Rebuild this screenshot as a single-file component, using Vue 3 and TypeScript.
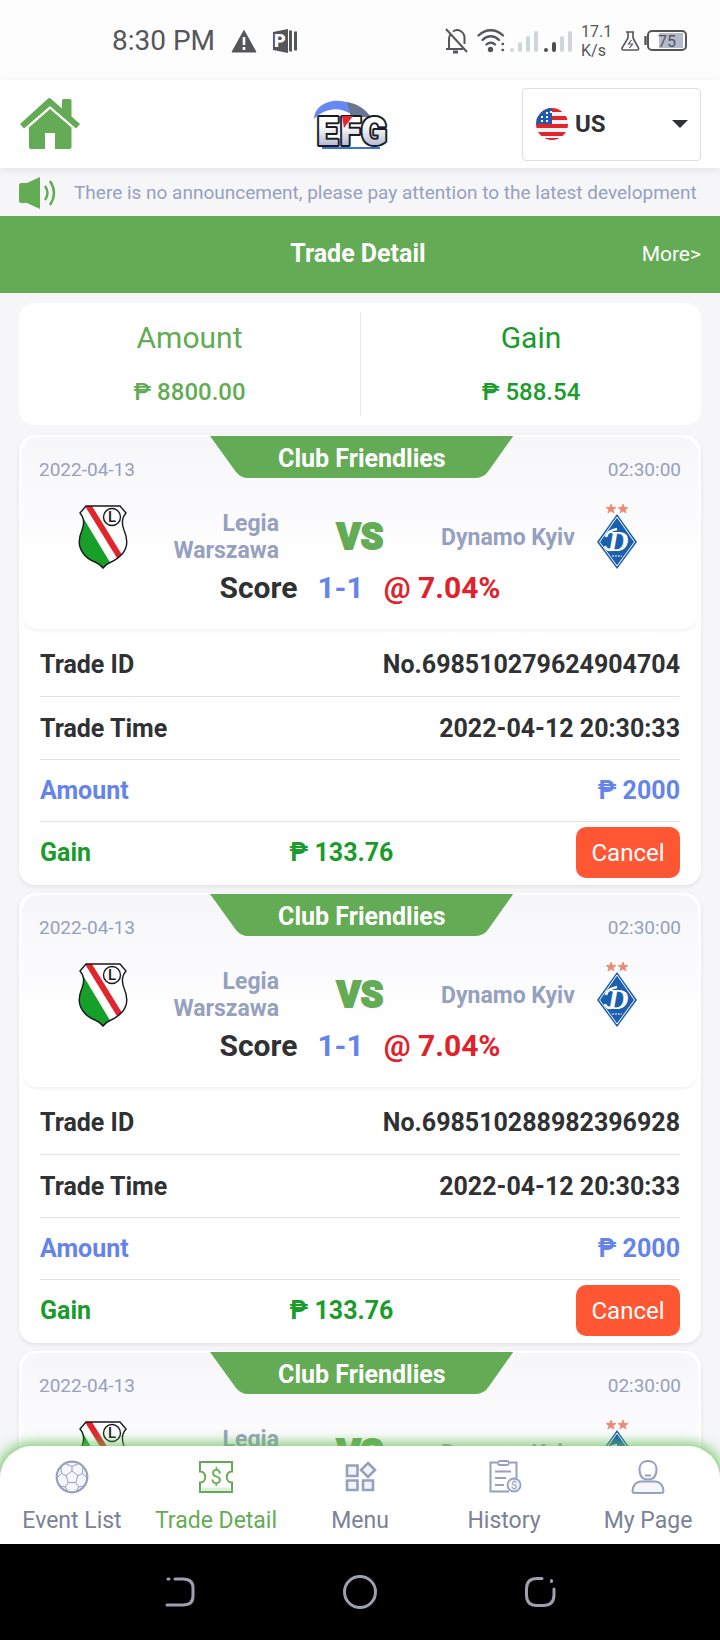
<script setup lang="ts">
import { ref } from 'vue'

interface Trade {
  id: string
  league: string
  date: string
  kickoff: string
  home: string
  away: string
  score: string
  odds: string
  time: string
  amount: string
  gain: string
}

interface Tab {
  key: string
  label: string
}

const base: Omit<Trade, 'id'> = {
  league: 'Club Friendlies',
  date: '2022-04-13',
  kickoff: '02:30:00',
  home: 'Legia Warszawa',
  away: 'Dynamo Kyiv',
  score: '1-1',
  odds: '@ 7.04%',
  time: '2022-04-12 20:30:33',
  amount: '₱ 2000',
  gain: '₱ 133.76',
}

const trades: Trade[] = [
  { ...base, id: 'No.698510279624904704' },
  { ...base, id: 'No.698510288982396928' },
  { ...base, id: '' },
]

const tabs: Tab[] = [
  { key: 'events', label: 'Event List' },
  { key: 'trade', label: 'Trade Detail' },
  { key: 'menu', label: 'Menu' },
  { key: 'history', label: 'History' },
  { key: 'me', label: 'My Page' },
]

const activeTab = ref('trade')
const language = ref('US')
</script>

<template>
  <div class="screen">
    <div class="status">
      <div class="status-left">
        <span class="clock">8:30 PM</span>
        <svg width="26" height="24" viewBox="0 0 26 24" aria-hidden="true">
          <path d="M13 1.5 25 23H1Z" fill="#55565a" stroke="#55565a" stroke-linejoin="round" />
          <path d="M13 8v8M13 18v3" stroke="#fff" stroke-width="2.6" />
        </svg>
        <svg width="25" height="26" viewBox="0 0 25 26" aria-hidden="true">
          <path d="M0 4 15 1v24L0 22Z" fill="#55565a" />
          <path d="M17.500 2.500v21M22.500 3.500v19" stroke="#55565a" stroke-width="3" />
          <text x="1" y="19" font-family="Roboto, sans-serif" font-size="18" font-weight="900" fill="#fff">P</text>
        </svg>
      </div>
      <div class="status-right">
        <svg width="25" height="26" viewBox="0 0 25 26" fill="none" stroke="#55565a" stroke-width="2" aria-hidden="true">
          <path d="M5 21V11c0-1.500.4-3 1.200-4.200M9 3.500C14-.5 20.500 4 20.500 10v6M2 21h17M2 1l21 23" />
          <path d="M9 24h5" stroke-width="3" />
        </svg>
        <svg width="29" height="26" viewBox="0 0 29 26" fill="none" stroke="#55565a" stroke-width="2.400" stroke-linecap="round" aria-hidden="true">
          <path d="M1.500 7.500c7-7 17.500-7 24.500 0M5.500 12c5-5 11.500-5 16.500 0M9.500 16.500c2.600-2.500 6-2.500 8.500 0" />
          <circle cx="13.500" cy="21.500" r="1.500" fill="#55565a" />
          <path d="M25.500 16h.5M25.500 22h.5" />
        </svg>
        <svg width="63" height="24" viewBox="0 0 63 24" stroke="#cfd6d6" stroke-width="4" stroke-linecap="round" aria-hidden="true">
          <path d="M2 21v0M10 15v6M18 9v12M26 4v17M52 9v12M60 4v17" />
          <path d="M36 21v0M44 15v6" stroke="#4d4e52" />
        </svg>
        <span class="speed"><span>17.1</span><span>K/s</span></span>
        <svg class="flask" width="19" height="20" viewBox="0 0 19 20" fill="none" stroke="#55565a" stroke-width="1.600" aria-hidden="true">
          <path d="M5 1h8M7 1v6L1 17q-.5 2 1.500 2h13.500q2 0 1.500-2L12 7V1" />
          <path d="m10.500 9-3 4h4l-3 4" stroke-width="1.200" />
        </svg>
        <svg width="44" height="24" viewBox="0 0 44 24" aria-hidden="true">
          <path d="M1.500 7v9" stroke="#55565a" stroke-width="2.400" />
          <rect x="15" y="4" width="24" height="15" fill="#b5bbcc" />
          <rect x="4" y="2" width="38" height="19" rx="4" fill="none" stroke="#55565a" stroke-width="2" />
          <text x="23" y="17.500" text-anchor="middle" font-family="Roboto, sans-serif" font-size="16" fill="#55565a">75</text>
        </svg>
      </div>
    </div>

    <header class="header">
      <a class="home" href="#" aria-label="Home">
        <svg width="60" height="52" viewBox="0 0 60 52" fill="#64ab55" aria-hidden="true">
          <path d="M30 0 42 10.500V2.500Q42 1 43.500 1H50q1.500 0 1.500 1.500V18.500L60 26 56 30.500 30 8 4 30.500 0 26 27 1.500Q30-1 30 0Z" />
          <path d="M30 11 51.500 29.500V49q0 2-2 2H35V35H25V51H11q-2 0-2-2V29.500Z" />
        </svg>
      </a>
      <svg class="logo" width="94" height="50" viewBox="0 0 94 50" aria-label="EFG">
        <defs>
          <linearGradient id="metal" x1="0" y1="0" x2="0" y2="1">
            <stop offset=".35" stop-color="#fff" />
            <stop offset="1" stop-color="#979db8" />
          </linearGradient>
        </defs>
        <path d="M0 20C1 2 26-4 43 8L54 15H37C25 7 10 9 0 20Z" fill="#6688f4" />
        <path d="M33 3C44 5 51 10 57 18H37Z" fill="#68768f" />
        <path d="M8 49H66" stroke="#3977cf" stroke-width="2" />
        <g font-family="Roboto, sans-serif" font-weight="900" font-size="38" fill="url(#metal)" stroke="#191c26" stroke-width="4" stroke-linejoin="round" paint-order="stroke">
          <text x="3" y="46">E</text>
          <text x="26" y="46">F</text>
          <text x="47" y="46">G</text>
        </g>
        <path d="M28 17H39L30 29Z" fill="#e32630" />
      </svg>
      <label class="language">
        <svg width="32" height="32" viewBox="0 0 32 32" aria-hidden="true">
          <clipPath id="flag"><circle cx="16" cy="16" r="16" /></clipPath>
          <g clip-path="url(#flag)">
            <path fill="#f3f3f4" d="M0 0h32v32H0z" />
            <path d="M0 2h32M0 10h32M0 18h32M0 26h32M0 32h32" stroke="#e4242b" stroke-width="4" />
            <path fill="#2359a8" d="M0 0h16v16H0z" />
            <path d="M5 9h2M10 5h2M10 9h2M5 13h2M10 13h2M14 4h2" stroke="#fff" stroke-width="2" />
          </g>
        </svg>
        <select v-model="language" aria-label="Language">
          <option value="US">US</option>
          <option value="PH">PH</option>
        </select>
        <svg width="16" height="8" viewBox="0 0 16 8" aria-hidden="true"><path d="M0 0h16L8 8Z" fill="#2f3133" /></svg>
      </label>
    </header>

    <div class="notice">
      <svg width="37" height="32" viewBox="0 0 37 32" aria-hidden="true">
        <path d="M2 6h6L21 0v32L8 26H2Q0 26 0 24V8Q0 6 2 6Z" fill="#64ab55" />
        <path d="M26 9q5 7 0 14M31 4q8 12 0 24" fill="none" stroke="#64ab55" stroke-width="2.400" />
      </svg>
      <p>There is no announcement, please pay attention to the latest development</p>
    </div>

    <div class="titlebar">
      <h1>Trade Detail</h1>
      <a href="#">More&gt;</a>
    </div>

    <main class="content">
      <section class="summary">
        <div class="total">
          <span class="total-label">Amount</span>
          <span class="total-value">₱ 8800.00</span>
        </div>
        <div class="total gain">
          <span class="total-label">Gain</span>
          <span class="total-value">₱ 588.54</span>
        </div>
      </section>

      <article v-for="(trade, index) in trades" :key="index" class="card">
        <div class="match">
          <div class="banner">
            <svg viewBox="0 0 303 42" preserveAspectRatio="none" aria-hidden="true">
              <path d="M0 0H303L279 34Q274 42 265 42H38Q31 42 26 36Z" fill="#64ab55" />
            </svg>
            <h2>{{ trade.league }}</h2>
          </div>
          <div class="when">
            <time>{{ trade.date }}</time>
            <time>{{ trade.kickoff }}</time>
          </div>
          <div class="teams">
            <svg class="crest" width="50" height="64" viewBox="0 0 50 64" aria-hidden="true">
              <clipPath :id="`shield-${index}`">
                <path d="M8 1H42L48 8Q42 15 46 25 52 39 45 48 40 54 33 57 28 59 25 63 22 59 17 57 9 54 5 48-2 39 4 25 8 15 2 8Z" />
              </clipPath>
              <g :clip-path="`url(#shield-${index})`">
                <path fill="#fff" d="M0 0h50v64H0z" />
                <path d="M0 4 36 64H0Z" fill="#16a02a" />
                <path d="M8-3 48 62" stroke="#e1252c" stroke-width="6" />
              </g>
              <path d="M8 1H42L48 8Q42 15 46 25 52 39 45 48 40 54 33 57 28 59 25 63 22 59 17 57 9 54 5 48-2 39 4 25 8 15 2 8Z" fill="none" stroke="#17191c" stroke-width="1.400" />
              <circle cx="34" cy="12" r="8.500" fill="#fff" stroke="#17191c" stroke-width="1.400" />
              <text x="34" y="17" text-anchor="middle" font-family="Roboto, sans-serif" font-weight="500" font-size="15" fill="#17191c">L</text>
            </svg>
            <span class="team home-team">{{ trade.home }}</span>
            <span class="versus">VS</span>
            <span class="team">{{ trade.away }}</span>
            <svg class="crest" width="50" height="66" viewBox="0 0 50 66" aria-hidden="true">
              <path d="m19 0 1.300 3.300 3.700.2-2.900 2.200 1 3.300-3.100-2-3.100 2 1-3.300L14 3.500l3.700-.2ZM31 0l1.300 3.300 3.700.2-2.900 2.200 1 3.300-3.100-2-3.100 2 1-3.300L26 3.500l3.700-.2Z" fill="#e98b76" stroke="#e98b76" stroke-width=".8" />
              <path d="M25 10 45 38 25 65 5 38Z" fill="#1c5fae" />
              <path d="M25 13 42.500 38 25 62 7.500 38Z" fill="none" stroke="#fff" />
              <text x="26" y="47" text-anchor="middle" font-family="'Liberation Serif', serif" font-style="italic" font-weight="700" font-size="29" fill="#fff">D</text>
              <path d="M14 33q1-6 11-8M13 42q1 4 6 4" fill="none" stroke="#fff" stroke-width="2.500" />
              <path d="M20 52h10" stroke="#8fb0da" stroke-width="2" stroke-dasharray="2 1" />
            </svg>
          </div>
          <div class="result">
            <span>Score</span>
            <span class="score">{{ trade.score }}</span>
            <span class="odds">{{ trade.odds }}</span>
          </div>
        </div>
        <dl v-if="trade.id" class="rows">
          <div class="row first"><dt>Trade ID</dt><dd>{{ trade.id }}</dd></div>
          <div class="row"><dt>Trade Time</dt><dd>{{ trade.time }}</dd></div>
          <div class="row blue"><dt>Amount</dt><dd>{{ trade.amount }}</dd></div>
          <div class="row green">
            <dt>Gain</dt>
            <dd>{{ trade.gain }}</dd>
            <dd class="action"><button type="button" class="cancel">Cancel</button></dd>
          </div>
        </dl>
      </article>
    </main>

    <nav class="tabs">
      <button
        v-for="tab in tabs"
        :key="tab.key"
        type="button"
        class="tab"
        :class="{ active: tab.key === activeTab }"
        @click="activeTab = tab.key"
      >
        <svg width="34" height="34" viewBox="0 0 34 34" fill="none" stroke="currentColor" stroke-width="1.800" aria-hidden="true">
          <g v-if="tab.key === 'events'">
            <circle cx="17" cy="17" r="15.300" fill="#f6f7fa" stroke-width="2.200" />
            <path d="m17 11 6 4.500-2.300 7h-7.400L11 15.500ZM17 11V6.500M23 15.500l4.500-2M20.700 22.500l3 4.500M13.300 22.500l-3 4.500M11 15.500l-4.500-2M10 3.500l7 3 7-3M2 18l4.500-4.500L6 6M32 18l-4.500-4.500L28 6M5 26l5.300 1 3 5M29 26l-5.300 1-3 5" stroke-width="1" />
          </g>
          <g v-else-if="tab.key === 'trade'">
            <path d="M1 2h32v9.500c-7 0-7 11 0 11V32H1v-9.500c7 0 7-11 0-11Z" stroke-width="2" />
            <path d="M3 29.500h28" stroke-width="4" opacity=".2" />
            <text x="17" y="24" text-anchor="middle" font-family="Roboto, sans-serif" font-size="20" fill="currentColor" stroke="none">$</text>
          </g>
          <g v-else-if="tab.key === 'menu'" stroke-width="2.600">
            <path d="M4 5.500h10.500V16H4ZM4 20.500h10.500V30H4ZM20 20.500h10V30H20ZM25 3l7 7-7 7-7-7Z" fill="#f3f4f8" />
          </g>
          <g v-else-if="tab.key === 'history'">
            <path d="M10 2.500H3.500v29H22M23 2.500h6.500V18M8 11.500h16M8 18h11M8 25h9" stroke-width="2" />
            <rect x="11" y="1" width="11" height="4" rx="2" />
            <circle cx="27" cy="25" r="6.500" fill="#f3f4f8" />
            <text x="27" y="29" text-anchor="middle" font-family="Roboto, sans-serif" font-size="11" fill="currentColor" stroke="none">$</text>
          </g>
          <g v-else stroke-width="2">
            <path d="M17 1c5 0 8.500 3 8.500 8 0 6-2.500 10.500-8.500 10.500S8.500 15 8.500 9c0-5 3.500-8 8.500-8ZM14 15.500h6" />
            <path d="M9 21.500h16q7 1.500 7.500 9.500 0 2-2.500 2H4q-2.500 0-2.500-2Q2 23 9 21.500Z" fill="#f6f7fa" />
          </g>
        </svg>
        <span>{{ tab.label }}</span>
      </button>
    </nav>

    <div class="system">
      <button type="button" aria-label="Back">
        <svg width="34" height="34" viewBox="0 0 34 34"><path d="M12 4h8q10 0 10 9v8q0 9-10 9H4M5 4h1" /></svg>
      </button>
      <button type="button" aria-label="Home screen">
        <svg width="34" height="34" viewBox="0 0 34 34"><circle cx="17" cy="17" r="15.500" /></svg>
      </button>
      <button type="button" aria-label="Recent apps">
        <svg width="34" height="34" viewBox="0 0 34 34"><path d="M19 3.500H14Q3.500 3.500 3.500 14v6Q3.500 30.500 14 30.500h6Q31 30.500 31 20v-6M28.500 5.500v1" /></svg>
      </button>
    </div>
  </div>
</template>

<style>
body {
  background: #f6f6f8;
}
</style>

<style scoped>
.screen {
  display: flex;
  flex-direction: column;
  height: 100vh;
  overflow: hidden;
  background: #f6f6f8;
  color: #2f3133;
  font-family: Roboto, "Liberation Sans", sans-serif;
}
.screen * {
  box-sizing: border-box;
}
svg {
  display: block;
  flex: none;
  overflow: visible;
}
a {
  color: inherit;
  text-decoration: none;
}
button {
  margin: 0;
  padding: 0;
  border: 0;
  background: none;
  font: inherit;
  cursor: pointer;
}

.status {
  display: flex;
  flex: none;
  align-items: center;
  justify-content: space-between;
  height: 80px;
  padding: 2px 32px 0 112px;
  background: #fdfdfd;
  color: #55565a;
}
.status-left,
.status-right {
  display: flex;
  align-items: center;
}
.status-left {
  gap: 16px;
}
.status-right {
  gap: 8px;
}
.status-right svg:nth-child(2) {
  margin-right: -4px;
}
.clock {
  font-size: 28px;
  line-height: 32px;
}
.speed {
  display: grid;
  width: 32px;
  font-size: 16px;
  line-height: 19px;
}
.flask {
  margin-right: -4px;
}

.header {
  position: relative;
  z-index: 1;
  display: grid;
  flex: none;
  grid-template-columns: 1fr auto 1fr;
  align-items: center;
  height: 88px;
  padding: 0 19px 0 20px;
  background: #fff;
  box-shadow: 0 2px 8px rgb(0 0 0 / 8%);
}
.home {
  justify-self: start;
}
.language {
  display: flex;
  align-items: center;
  justify-self: end;
  width: 179px;
  height: 73px;
  padding: 0 12px 0 13px;
  border: 1px solid #dcdfdf;
  border-radius: 4px;
}
.language select {
  flex: 1;
  min-width: 0;
  height: 40px;
  padding: 0 0 0 7px;
  border: 0;
  appearance: none;
  background: none;
  color: inherit;
  font: 700 24px/40px Roboto, "Liberation Sans", sans-serif;
}

.notice {
  display: flex;
  flex: none;
  align-items: center;
  gap: 18px;
  height: 48px;
  padding: 2px 19px 0;
  color: #96a0bf;
}
.notice p {
  flex: 1;
  min-width: 0;
  margin: 0;
  overflow: hidden;
  font-size: 19px;
  line-height: 24px;
  white-space: nowrap;
}

.titlebar {
  display: grid;
  flex: none;
  grid-template-columns: 1fr auto 1fr;
  align-items: center;
  height: 77px;
  padding: 0 19px 2px 15px;
  background: #64ab55;
  color: #fff;
}
.titlebar h1 {
  grid-column: 2;
  margin: 0;
  font-size: 25px;
  line-height: 32px;
}
.titlebar a {
  justify-self: end;
  font-size: 21px;
}

.content {
  flex: 1;
  min-height: 0;
  padding: 10px 19px 0;
  overflow: hidden;
}
.summary {
  display: grid;
  grid-template-columns: 1fr 1fr;
  height: 122px;
  margin-bottom: 10px;
  padding: 9px 0;
  border-radius: 16px;
  background: #fff;
}
.total {
  display: grid;
  align-content: center;
  gap: 20px;
  color: #64ab55;
  text-align: center;
}
.total.gain {
  border-left: 1px solid #ebebed;
  color: #1a9c2c;
}
.total-label {
  font-size: 30px;
  line-height: 36px;
}
.total-value {
  font-size: 24px;
  font-weight: 500;
  line-height: 32px;
}

.card {
  margin-bottom: 8px;
  padding: 2px 3px;
  border-radius: 16px;
  background: #fff;
  box-shadow: 0 2px 4px rgb(0 0 0 / 8%);
}
.match {
  position: relative;
  height: 192px;
  margin-bottom: 4px;
  border-radius: 16px;
  background: linear-gradient(#f7f7f9, #fbfbfd 40%, #fff 65%);
  box-shadow: 0 3px 2px #f6f6f7;
}
.banner {
  position: absolute;
  top: -1px;
  right: 27%;
  left: 28%;
  height: 42px;
  margin: 0 2px 0 -1px;
}
.banner svg {
  position: absolute;
  width: 100%;
  height: 100%;
}
.banner h2 {
  position: relative;
  margin: 0;
  color: #fff;
  font-size: 25px;
  line-height: 45px;
  text-align: center;
}
.when {
  display: flex;
  justify-content: space-between;
  padding: 21px 17px 0;
  color: #96a0bf;
  font-size: 19px;
  line-height: 24px;
}
.teams {
  display: flex;
  align-items: center;
  height: 66px;
  margin-top: 22px;
  padding: 0 56px;
}
.team {
  flex: 1;
  color: #96a0bf;
  font-size: 23px;
  font-weight: 700;
  line-height: 27px;
}
.home-team {
  text-align: right;
}
.versus {
  width: 162px;
  color: #64ab55;
  font-size: 36px;
  font-weight: 900;
  line-height: 40px;
  text-align: center;
  -webkit-text-stroke: 2px #64ab55;
}
.result {
  display: flex;
  justify-content: center;
  gap: 20px;
  font-size: 30px;
  font-weight: 700;
  line-height: 36px;
}
.score,
.blue {
  color: #6484ec;
}
.odds {
  color: #e1222a;
}
.rows {
  margin: 0;
  padding: 0 18px;
}
.row {
  display: flex;
  align-items: center;
  justify-content: space-between;
  height: 63px;
  border-bottom: 1px solid #e2e2e2;
  font-size: 25px;
  font-weight: 700;
}
.row dd {
  margin: 0;
}
.row.first {
  height: 64px;
}
.row.blue {
  height: 62px;
  color: #6484ec;
}
.row.green {
  display: grid;
  grid-template-columns: 39% 1fr auto;
  height: 61px;
  border-bottom: 0;
  color: #1a9c2c;
}
.cancel {
  display: block;
  width: 104px;
  height: 51px;
  border-radius: 10px;
  background: #ff5733;
  color: #fff;
  font-size: 24px;
  font-weight: 400;
}

.tabs {
  position: relative;
  display: grid;
  flex: none;
  grid-template-columns: repeat(5, 1fr);
  height: 98px;
  margin-top: -32px;
  border-radius: 32px 32px 0 0;
  background: #fff;
  box-shadow: 0 0 12px 4px rgb(100 190 85 / 75%);
}
.tab {
  display: flex;
  flex-direction: column;
  align-items: center;
  gap: 11px;
  padding-top: 14px;
  color: #96a0bf;
  font-size: 23px;
  line-height: 32px;
}
.tab span {
  color: #7b8196;
}
.tab.active,
.tab.active span {
  color: #64ab55;
}

.system {
  position: relative;
  display: flex;
  flex: none;
  align-items: center;
  justify-content: space-around;
  height: 96px;
  padding: 0 90px;
  background: #000;
}
.system svg {
  fill: none;
  stroke: #9ba0b2;
  stroke-width: 3;
  stroke-linecap: round;
}
</style>
